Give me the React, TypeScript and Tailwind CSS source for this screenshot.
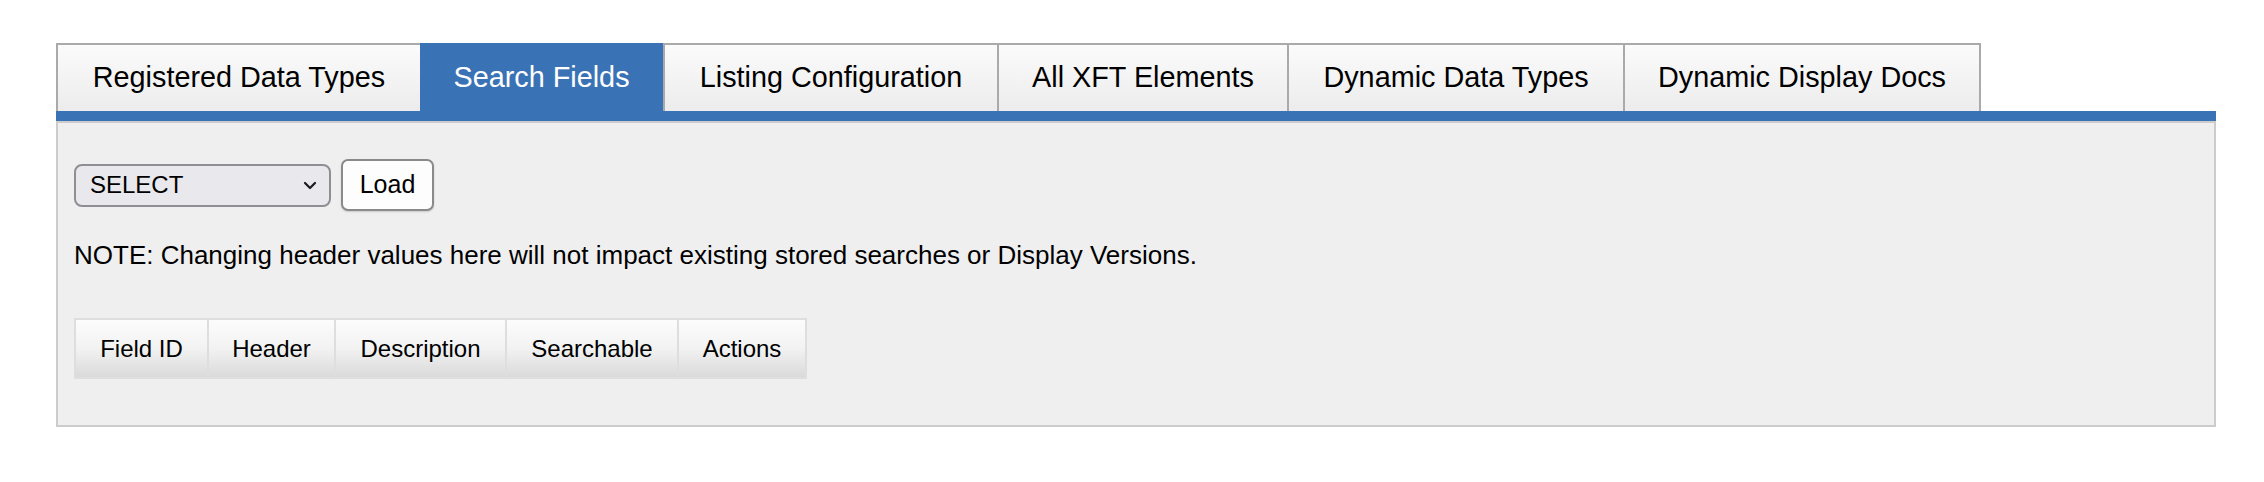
const tabs = [
  { label: "Registered Data Types", w: "w-[364px]" },
  { label: "Search Fields", w: "w-[243px]", active: true },
  { label: "Listing Configuration", w: "w-[334px]" },
  { label: "All XFT Elements", w: "w-[290px]" },
  { label: "Dynamic Data Types", w: "w-[336px]" },
  { label: "Dynamic Display Docs", w: "w-[358px]" },
];

const columns = [
  { label: "Field ID", w: "w-[135px]" },
  { label: "Header", w: "w-[127px]" },
  { label: "Description", w: "w-[171px]" },
  { label: "Searchable", w: "w-[172px]" },
  { label: "Actions", w: "w-[128px]" },
];

export default function App() {
  return (
    <div className="w-[2264px] h-[482px] bg-white font-['Liberation_Sans',Arial,sans-serif] text-black">
      <div className="ml-[56px] pt-[43px] w-[2160px]">
        {/* tab strip */}
        <div className="flex h-[68px]">
          {tabs.map((t, i) =>
            t.active ? (
              <div
                key={t.label}
                className={`${t.w} flex items-center justify-center pt-[2px] bg-[#3a73b5] text-white text-[28.8px]`}
              >
                {t.label}
              </div>
            ) : (
              <div
                key={t.label}
                className={`${t.w} flex items-center justify-center border-t-2 border-l-2 border-[#aaaaaa] bg-gradient-to-b from-[#fbfbfb] to-[#ececec] text-[28.8px] ${
                  i === tabs.length - 1 ? "border-r-2" : ""
                }`}
              >
                {t.label}
              </div>
            )
          )}
        </div>
        <div className="h-[10px] bg-[#3a73b5]" />

        {/* panel */}
        <div className="h-[306px] border-2 border-[#cccccc] bg-[#efefef] px-[16px] pt-[36px]">
          <div className="flex items-center gap-[10px]">
            <div className="w-[257px] h-[43px] rounded-[8px] border-2 border-[#8e8e93] bg-[#e8e8ed] flex items-center justify-between pl-[14px] pr-[12px] text-[24px]">
              <span>SELECT</span>
              <svg width="14" height="9" viewBox="0 0 14 9" fill="none">
                <path
                  d="M2 2l5 5 5-5"
                  stroke="#1c1c1c"
                  strokeWidth="2.2"
                  strokeLinecap="round"
                  strokeLinejoin="round"
                />
              </svg>
            </div>
            <button className="w-[93px] h-[52px] rounded-[7px] border-2 border-[#8a8a8a] bg-[#fdfdfd] shadow-[0_1px_2px_rgba(0,0,0,0.15)] text-[25px] text-black">
              Load
            </button>
          </div>

          <p className="mt-[29px] text-[26px] leading-[30px]">
            NOTE: Changing header values here will not impact existing stored searches or Display Versions.
          </p>

          <div className="mt-[48px] flex">
            {columns.map((c, i) => (
              <div
                key={c.label}
                className={`${c.w} h-[61px] flex items-center justify-center border-y-2 border-r-2 border-[#dedede] bg-gradient-to-b from-[#fcfcfc] via-[#f2f2f2] to-[#dadada] text-[24px] ${
                  i === 0 ? "border-l-2" : ""
                }`}
              >
                {c.label}
              </div>
            ))}
          </div>
        </div>
      </div>
    </div>
  );
}
